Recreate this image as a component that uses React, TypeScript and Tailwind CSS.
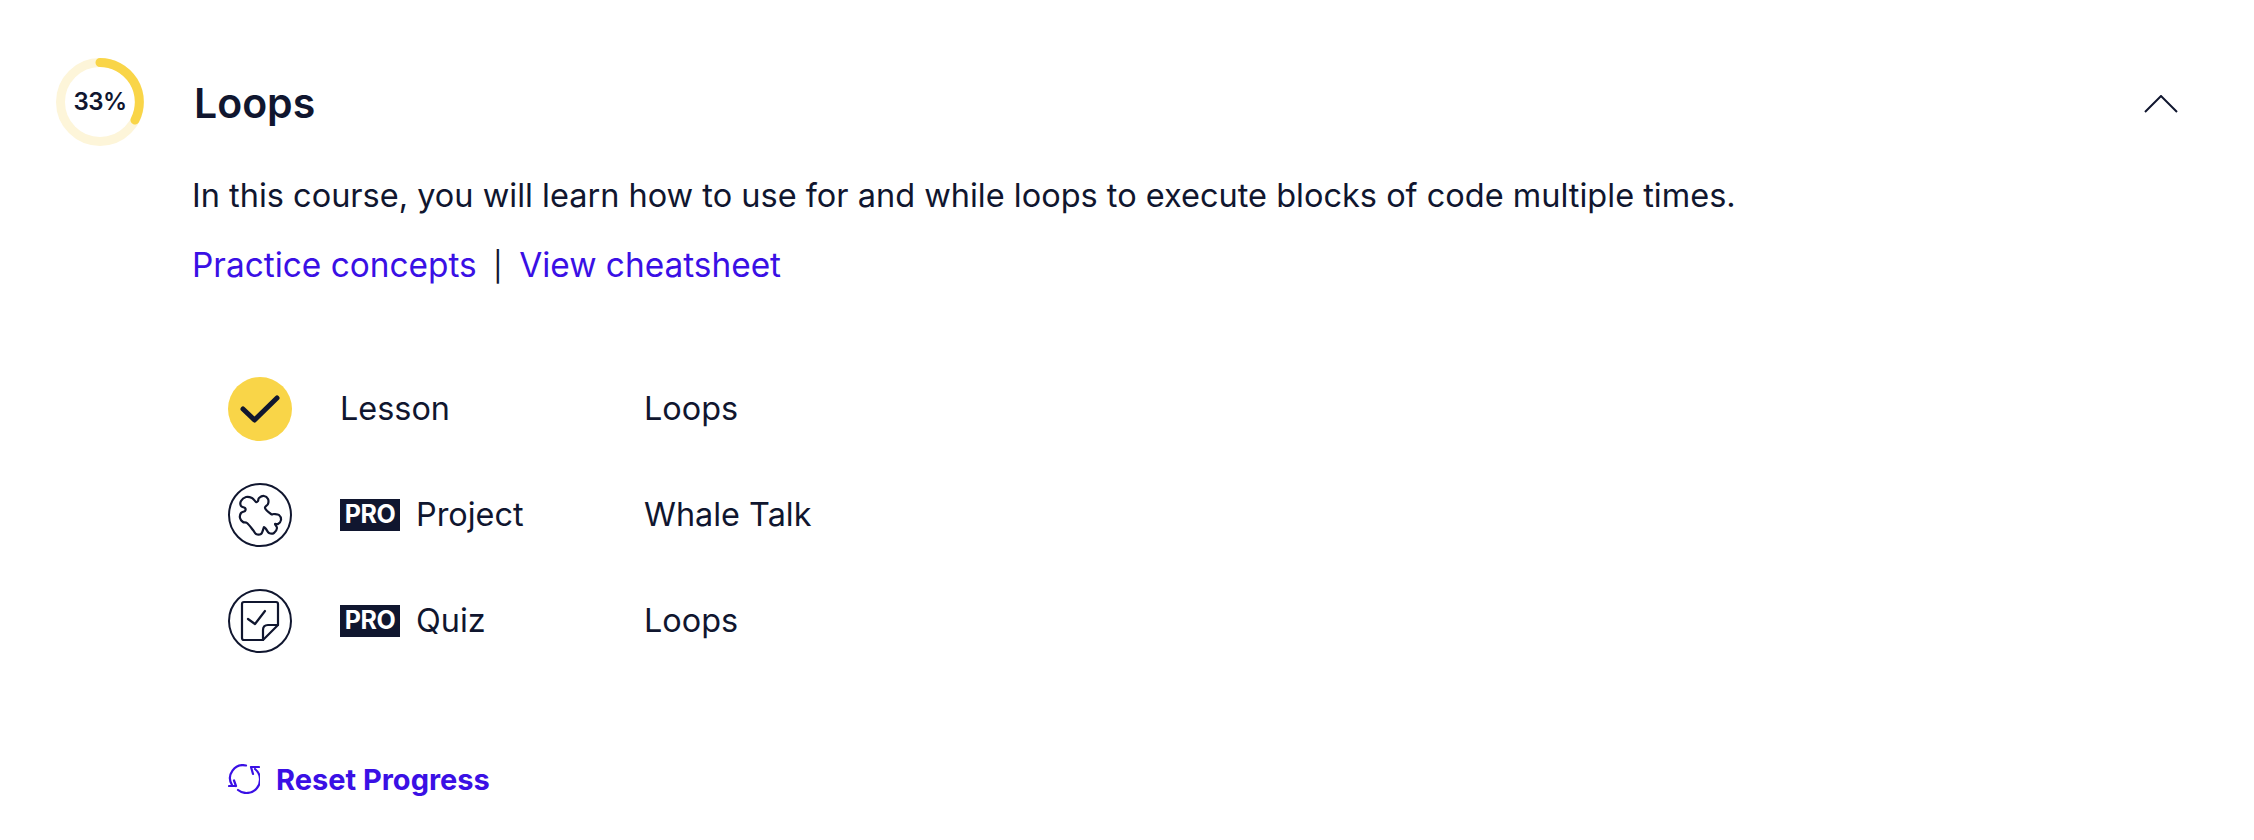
import React from "react";

const font = { fontFamily: '"Inter", "Liberation Sans", sans-serif' };

const puzzlePts: [number, number][] = [
  [13, 18], [18, 14], [24, 15], [28, 19], [30, 18], [31, 15], [36, 13], [40, 16], [40, 21], [37, 25], [43, 31], [46, 31], [51, 32], [53, 37],
  [50, 41], [47, 41], [49, 45], [46, 50], [41, 50], [38, 46], [36, 44], [35, 47], [33, 51], [28, 51], [25, 47], [19, 40], [15, 39], [12, 35], [13, 30], [17, 28], [17, 25], [13, 23],
];

function catmull(pts: [number, number][]) {
  const n = pts.length;
  let d = `M${pts[0][0]} ${pts[0][1]}`;
  for (let i = 0; i < n; i++) {
    const p0 = pts[(i - 1 + n) % n];
    const p1 = pts[i];
    const p2 = pts[(i + 1) % n];
    const p3 = pts[(i + 2) % n];
    d += ` C${p1[0] + (p2[0] - p0[0]) / 6} ${p1[1] + (p2[1] - p0[1]) / 6} ${p2[0] - (p3[0] - p1[0]) / 6} ${p2[1] - (p3[1] - p1[1]) / 6} ${p2[0]} ${p2[1]}`;
  }
  return d + "Z";
}

function Ring() {
  return (
    <div className="relative w-[88px] h-[88px] shrink-0 flex items-center justify-center">
      <svg className="absolute inset-0" width="88" height="88" viewBox="0 0 88 88" fill="none">
        <circle cx="44" cy="44" r="39.5" stroke="#fdf5d9" strokeWidth="9" />
        <path d="M44 4.5 A39.5 39.5 0 0 1 79 62" stroke="#f9d548" strokeWidth="9" strokeLinecap="round" />
      </svg>
      <span className="relative text-[24px] font-semibold text-[#10162f] tracking-[-0.5px]">33%</span>
    </div>
  );
}

function Check() {
  return (
    <div className="w-16 h-16 rounded-full bg-[#f9d548] flex items-center justify-center shrink-0">
      <svg width="64" height="64" viewBox="0 0 64 64" fill="none">
        <path d="M15 32 L26.5 43 L49 21" stroke="#10162f" strokeWidth="5" strokeLinecap="round" strokeLinejoin="round" />
      </svg>
    </div>
  );
}

function Puzzle() {
  return (
    <svg width="64" height="64" viewBox="0 0 64 64" fill="none" className="shrink-0" stroke="#10162f">
      <circle cx="32" cy="32" r="31" strokeWidth="2" />
      <path d={catmull(puzzlePts)} strokeWidth="2.2" strokeLinejoin="round" />
    </svg>
  );
}

function QuizIcon() {
  return (
    <svg width="64" height="64" viewBox="0 0 64 64" fill="none" className="shrink-0" stroke="#10162f" strokeWidth="2.2" strokeLinejoin="round" strokeLinecap="round">
      <circle cx="32" cy="32" r="31" strokeWidth="2" />
      <path d="M35 51 H16 A2 2 0 0 1 14 49 V15 A2 2 0 0 1 16 13 H48 A2 2 0 0 1 50 15 V36 Z" />
      <path d="M35 51 V41 Q35 36 40 36 H50" />
      <path d="M20 30 L27 35 L37 22" />
    </svg>
  );
}

function Pro() {
  return (
    <span className="w-[60px] h-8 bg-[#10162f] text-white text-[25px] font-bold flex items-center justify-center shrink-0 mr-4 tracking-[-0.5px]">
      PRO
    </span>
  );
}

function Row({ icon, label, title, pro }: { icon: React.ReactNode; label: string; title: string; pro?: boolean }) {
  return (
    <div className="flex items-center h-[106px]">
      <div className="w-[112px] shrink-0">{icon}</div>
      <div className="w-[304px] flex items-center shrink-0">
        {pro && <Pro />}
        <span>{label}</span>
      </div>
      <span>{title}</span>
    </div>
  );
}

export default function App() {
  return (
    <div className="w-[2254px] h-[840px] bg-white text-[#10162f] overflow-hidden pt-[58px]" style={font}>
      <div className="flex items-center pl-14 pr-[76px]">
        <Ring />
        <h2 className="ml-[50px] text-[41px] font-semibold leading-[50px] flex-1 pt-[2px]">Loops</h2>
        <svg className="mt-[3px]" width="34" height="18" viewBox="0 0 34 18" fill="none" stroke="#10162f" strokeWidth="2">
          <path d="M1 17 L17 1 L33 17" />
        </svg>
      </div>
      <div className="pl-[192px] mt-[30px]">
        <p className="text-[32.5px] leading-[40px] h-[40px]">
          In this course, you will learn how to use for and while loops to execute blocks of code multiple times.
        </p>
        <p className="text-[33.4px] leading-[40px] mt-[29px] text-[#3a10e5]">
          Practice concepts <span className="text-[#10162f] text-[29px] mx-[7px]">|</span> View cheatsheet
        </p>
      </div>
      <div className="pl-[228px] mt-[69px] text-[32.4px]">
        <Row icon={<Check />} label="Lesson" title="Loops" />
        <Row icon={<Puzzle />} label="Project" title="Whale Talk" pro />
        <Row icon={<QuizIcon />} label="Quiz" title="Loops" pro />
      </div>
      <div className="pl-[228px] mt-[90px] flex items-center text-[#3a10e5]">
        <svg width="32" height="30" viewBox="0 0 32 30" fill="none" stroke="#3a10e5" strokeWidth="2.2" strokeLinecap="round" strokeLinejoin="round">
          <path d="M18 1.5 A13 13 0 0 0 4 21" />
          <path d="M1 22 H8 M6 16.5 L8 22" />
          <path d="M27 5 A13 13 0 0 1 10 26" />
          <path d="M23 3 H31 M23 3 L25 10" />
        </svg>
        <span className="ml-4 text-[29px] font-bold leading-none">Reset Progress</span>
      </div>
    </div>
  );
}
